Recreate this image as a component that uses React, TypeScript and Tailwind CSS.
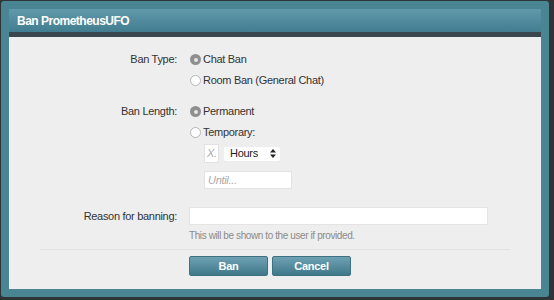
function Radio({ checked }: { checked?: boolean }) {
  return checked ? (
    <span className="w-[11px] h-[11px] rounded-full bg-[#8f8f8f] flex items-center justify-center shrink-0">
      <span className="w-[4px] h-[4px] rounded-full bg-[#e6e6e6]" />
    </span>
  ) : (
    <span className="w-[11px] h-[11px] rounded-full bg-white border border-[#b5b5b5] shrink-0" />
  );
}

function Option({ checked, label }: { checked?: boolean; label: string }) {
  return (
    <div className="h-[21px] flex items-center gap-[2px]">
      <Radio checked={checked} />
      <span>{label}</span>
    </div>
  );
}

export default function App() {
  return (
    <div
      className="w-[554px] h-[300px] bg-[#2f3437] overflow-hidden text-[11px] text-[#333] tracking-[-0.3px]"
      style={{ fontFamily: '"Liberation Sans", Arial, sans-serif' }}
    >
      <div className="ml-[1px] mt-[1px] w-[548px] h-[296px] bg-[#4a8594] rounded-[3px] p-[8px]">
        <div className="h-full flex flex-col bg-[#eeeeee]">
          <div className="h-[23px] shrink-0 bg-gradient-to-b from-[#6199aa] to-[#417d90] flex items-center px-[8px] text-white font-bold text-[12px] tracking-[-0.5px]">
            Ban PrometheusUFO
          </div>
          <div className="h-[5px] shrink-0 bg-[#3a474e]" />

          <div className="flex-1 pt-[12px]">
            <div className="grid grid-cols-[168px_1fr] gap-x-[13px]">
              <div className="h-[21px] flex items-center justify-end">Ban Type:</div>
              <div>
                <Option checked label="Chat Ban" />
                <Option label="Room Ban (General Chat)" />
              </div>

              <div className="h-[21px] mt-[10px] flex items-center justify-end">Ban Length:</div>
              <div className="mt-[10px]">
                <Option checked label="Permanent" />
                <Option label="Temporary:" />
                <div className="ml-[14px] mt-[1px] flex items-center gap-[5px]">
                  <div className="w-[15px] h-[19px] bg-white border border-[#e2e2e2] flex items-center pl-[2px] text-[#aaa] italic">
                    X.
                  </div>
                  <div className="w-[56px] h-[14px] bg-white rounded-[2px] flex items-center justify-between pl-[6px] pr-[4px] text-[#222]">
                    <span>Hours</span>
                    <svg width="6" height="9" viewBox="0 0 6 9">
                      <path d="M3 0 L6 3.5 L0 3.5 Z M0 5.5 L6 5.5 L3 9 Z" fill="#222" />
                    </svg>
                  </div>
                </div>
                <div className="ml-[14px] mt-[8px] w-[88px] h-[18px] bg-white border border-[#e2e2e2] flex items-center pl-[3px] text-[#aaa] italic">
                  Until...
                </div>
              </div>

              <div className="h-[18px] mt-[18px] flex items-center justify-end">Reason for banning:</div>
              <div className="mt-[18px] -ml-[1px]">
                <div className="w-[299px] h-[18px] bg-white border border-[#e4e4e4]" />
                <div className="mt-[3px] text-[10px] text-[#8a8a8a] tracking-[-0.4px]">
                  This will be shown to the user if provided.
                </div>
              </div>
            </div>

            <div className="mx-[31px] mt-[6px] border-t border-[#e2e2e2]" />

            <div className="mt-[6px] ml-[180px] flex gap-[4px]">
              <button className="w-[79px] h-[20px] rounded-[2px] bg-gradient-to-b from-[#6ea2b3] to-[#3f788b] text-white font-bold text-[11px] border border-[#3d7080]">
                Ban
              </button>
              <button className="w-[79px] h-[20px] rounded-[2px] bg-gradient-to-b from-[#6ea2b3] to-[#3f788b] text-white font-bold text-[11px] border border-[#3d7080]">
                Cancel
              </button>
            </div>
          </div>
        </div>
      </div>
    </div>
  );
}
